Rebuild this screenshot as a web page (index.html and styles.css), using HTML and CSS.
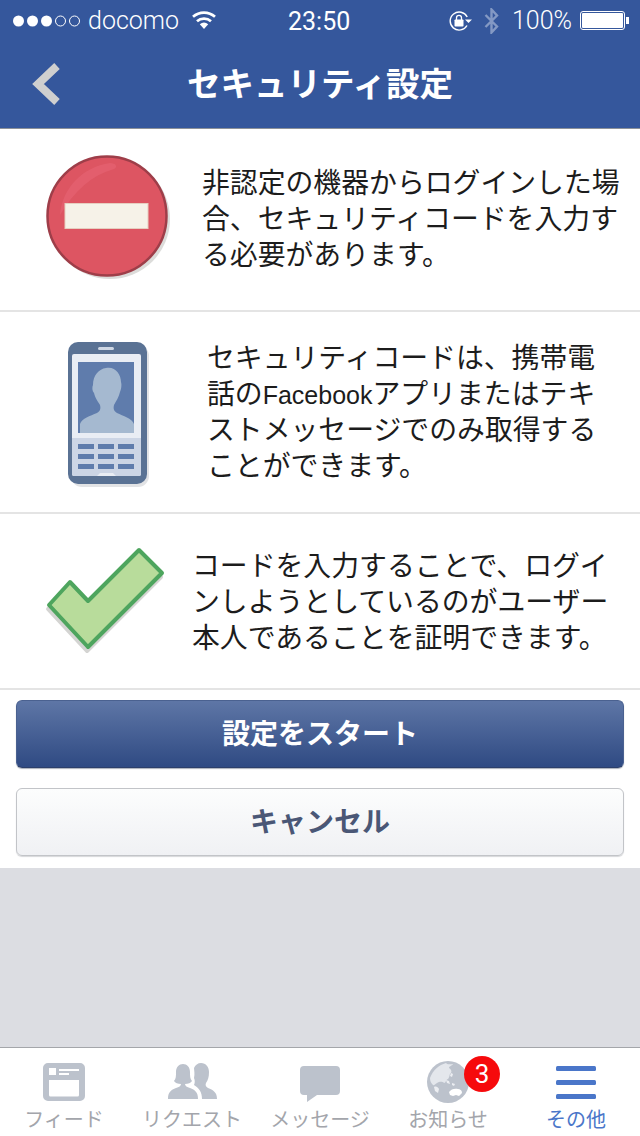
FILE: index.html
```html
<!DOCTYPE html>
<html lang="ja">
<head>
  <meta charset="UTF-8" />
  <meta name="viewport" content="width=device-width, initial-scale=1.0" />
  <title>セキュリティ設定</title>
  <link rel="stylesheet" href="styles.css">
</head>
<body>
  <div class="app">
    <header class="top">
      <div class="status">
        <div class="status-side">
          <svg class="signal" width="67" height="12" viewBox="0 0 67 12">
            <circle cx="5.500" cy="6" r="5.500" fill="#fff"/>
            <circle cx="19.500" cy="6" r="5.500" fill="#fff"/>
            <circle cx="33.500" cy="6" r="5.500" fill="#fff"/>
            <circle cx="47.500" cy="6" r="5" fill="none" stroke="#fff" stroke-width="1"/>
            <circle cx="61.500" cy="6" r="5" fill="none" stroke="#fff" stroke-width="1"/>
          </svg>
          <span class="carrier">docomo</span>
          <svg class="wifi" width="24" height="18" viewBox="0 0 24 18">
            <path d="M12 18 7.800 13.200a6.500 6.500 0 0 1 8.400 0Z" fill="#fff"/>
            <path d="M5 10.300a10.500 10.500 0 0 1 14 0M1 5.800a16.500 16.500 0 0 1 22 0" fill="none" stroke="#fff" stroke-width="2.700"/>
          </svg>
        </div>
        <span class="clock">23:50</span>
        <div class="status-side">
          <svg class="lock" width="23" height="20" viewBox="0 0 23 20">
            <path d="M18 14.500A9 9 0 1 1 18.200 6" fill="none" stroke="#fff" stroke-width="1.400"/>
            <path d="M16 8.500h7l-3.500 3.500Z" fill="#fff"/>
            <rect x="5.500" y="8.500" width="9" height="7" rx=".8" fill="#fff"/>
            <path d="M7.500 9V6.800a2.500 2.500 0 0 1 5 0V9" fill="none" stroke="#fff" stroke-width="1.300"/>
          </svg>
          <svg class="bt" width="15" height="26" viewBox="0 0 15 26">
            <path d="M1.500 7 13 18.500 7.500 24.500V1.500L13 7.500 1.500 19" fill="none" stroke="#8499c4" stroke-width="2.400"/>
          </svg>
          <span class="battery-pct">100%</span>
          <div class="battery"><div class="battery-fill"></div></div>
          <div class="battery-tip"></div>
        </div>
      </div>
      <div class="nav">
        <svg class="back" width="30" height="44" viewBox="0 0 30 44">
          <path d="M26 4 7 22l19 18" fill="none" stroke="#cfcfcf" stroke-width="8"/>
        </svg>
        <h1 class="nav-title">セキュリティ設定</h1>
      </div>
    </header>

    <section class="row row-stop">
      <svg class="stop-icon" width="130" height="130" viewBox="0 0 130 130">
        <circle cx="66" cy="66" r="60" fill="#dcdcda"/>
        <circle cx="63" cy="63" r="59.500" fill="#dd5562" stroke="#9e3e49" stroke-width="2.500"/>
        <path d="M16 62C18 36 38 14 66 10c6 0 8 4 4 6C48 22 30 38 16 62Z" fill="#e56272" opacity=".7"/>
        <rect x="21" y="50.500" width="83" height="25" fill="#f6f2e8" stroke="#e6cfc0" stroke-width="1"/>
      </svg>
      <p class="row-text">非認定の機器からログインした場<br>合、セキュリティコードを入力す<br>る必要があります。</p>
    </section>

    <section class="row row-phone">
      <svg class="phone-icon" width="84" height="150" viewBox="0 0 84 150">
        <rect x="5" y="5" width="78" height="142" rx="11" fill="#e2e3e5"/>
        <rect x="2" y="2" width="79" height="142" rx="10" fill="#5a7294"/>
        <rect x="32" y="7" width="16" height="3" rx="1.500" fill="#cfd7e4"/>
        <rect x="6" y="14" width="69" height="122" rx="2" fill="#e9edf4"/>
        <rect x="12" y="22" width="56" height="71" fill="#5f7cac"/>
        <path d="M14 93V84c2-6 10-8 17-11 3-2 4-4 3-8-1-2-5-7-6-12-2-2-2-6-1-8 0-10 6-16 13-17 9-2 15 6 15 14 1 3 0 8-1 10-1 5-4 9-6 13-1 4 0 6 3 8 6 3 15 5 17 11V93Z" fill="#a5b9d0"/>
        <path d="M6 98h69v36a2 2 0 0 1-2 2H50l-3-3H34l-3 3H8a2 2 0 0 1-2-2Z" fill="#ccd5e5"/>
        <g fill="#5f7cac">
          <rect x="12" y="104" width="16" height="5"/><rect x="32" y="104" width="16" height="5"/><rect x="52" y="104" width="16" height="5"/>
          <rect x="12" y="114" width="16" height="5"/><rect x="32" y="114" width="16" height="5"/><rect x="52" y="114" width="16" height="5"/>
          <rect x="12" y="124" width="16" height="5"/><rect x="32" y="124" width="16" height="5"/><rect x="52" y="124" width="16" height="5"/>
        </g>
      </svg>
      <p class="row-text">セキュリティコードは、携帯電<br>話の<span class="latin">Facebook</span>アプリまたはテキ<br>ストメッセージでのみ取得する<br>ことができます。</p>
    </section>

    <section class="row row-check">
      <svg class="check-icon" width="122" height="108" viewBox="0 0 122 108">
        <path d="M6 58 27 35 45 54 96 3 119 26 45 100Z" fill="#d4d4d2" stroke="#d4d4d2" stroke-width="4" stroke-linejoin="round" transform="translate(-1 4)"/>
        <path d="M6 58 27 35 45 54 96 3 119 26 45 100Z" fill="#b8dc9b" stroke="#4ea55e" stroke-width="4" stroke-linejoin="round"/>
      </svg>
      <p class="row-text">コードを入力することで、ログイ<br>ンしようとしているのがユーザー<br>本人であることを証明できます。</p>
    </section>

    <div class="actions">
      <button class="btn btn-primary">設定をスタート</button>
      <button class="btn btn-cancel">キャンセル</button>
    </div>

    <div class="spacer"></div>

    <nav class="tabs">
      <div class="tab">
        <svg width="44" height="40" viewBox="0 0 44 40">
          <path fill-rule="evenodd" d="M6 1h32a5 5 0 0 1 5 5v28a5 5 0 0 1-5 5H6a5 5 0 0 1-5-5V6a5 5 0 0 1 5-5ZM7 18v15a1.500 1.500 0 0 0 1.500 1.500h27A1.500 1.500 0 0 0 37 33V18ZM7 6v7h7V6ZM17 7v2h20V7ZM17 11v2h10v-2Z" fill="#bcc2cc"/>
        </svg>
        <span class="tab-label">フィード</span>
      </div>
      <div class="tab">
        <svg width="49" height="40" viewBox="0 -1 49 40">
          <path d="M0 36c0-7 3-9 8-11 3-1 5-2 5-4-3 0-6-1-7-3 2-2 2-5 2-9 0-5 3-8 7-8s7 3 7 8c0 4 0 7 2 9-1 2-4 3-7 3 0 2 2 3 5 4 5 2 8 4 8 11Z" fill="#bcc2cc"/>
          <path d="M33 0c5 0 8 4 8 9 0 5-1 8-3 11-1 2 0 4 2 5 5 2 9 4 9 11H34c0-7-3-11-8-14 1-2 1-5 0-7 1-4 0-8 0-10 1-3 4-5 7-5Z" fill="#bcc2cc"/>
        </svg>
        <span class="tab-label">リクエスト</span>
      </div>
      <div class="tab">
        <svg width="42" height="40" viewBox="0 0 42 40">
          <path d="M5 4h32a4 4 0 0 1 4 4v21a4 4 0 0 1-4 4H18L8 40v-7H5a4 4 0 0 1-4-4V8a4 4 0 0 1 4-4Z" fill="#bcc2cc"/>
        </svg>
        <span class="tab-label">メッセージ</span>
      </div>
      <div class="tab tab-globe">
        <svg width="42" height="42" viewBox="0 0 42 42">
          <circle cx="21" cy="21" r="21" fill="#bcc2cc"/>
          <path d="M3 17C6 9 12 4 19 2c1 2 5 1 7 1-1 2-4 2-4 4 2 1 3 3 2 5-2 1-1 4-3 6-2 0-2 4-4 4-2-2-5-1-7 0-2 1-3 3-4 2-2-2-3-4-3-7Z" fill="#e4e7ec"/>
          <path d="M7 26c2-1 4 0 5 2l-1 4-3-2ZM24 12l2 1-1 3-2-1ZM19 19l3 1 1 3-3-1ZM25 22l3 1-1 2-2-1Z" fill="#eceef2"/>
          <path d="M22 31c2-3 6-4 9-3 2 0 4 1 4 4l-3 3-3-1-3 1-3-1Z" fill="#fff"/>
        </svg>
        <span class="tab-label">お知らせ</span>
        <span class="badge">3</span>
      </div>
      <div class="tab tab-active">
        <svg width="40" height="33" viewBox="0 0 40 33">
          <rect y="0" width="40" height="5" rx="1.500" fill="#4a76c9"/>
          <rect y="14" width="40" height="5" rx="1.500" fill="#4a76c9"/>
          <rect y="28" width="40" height="5" rx="1.500" fill="#4a76c9"/>
        </svg>
        <span class="tab-label">その他</span>
      </div>
    </nav>
  </div>
</body>
</html>
```

FILE: styles.css
```css
* {
  box-sizing: border-box;
}
body {
  margin: 0;
  background: #fff;
  font-family: "Liberation Sans", "Noto Sans CJK JP", sans-serif;
}
.app {
  width: 640px;
  height: 1136px;
  display: flex;
  flex-direction: column;
  overflow: hidden;
}

/* header */
.top {
  height: 129px;
  background: #35579c;
  border-bottom: 1px solid #8c9199;
  color: #fff;
}
.status {
  height: 40px;
  padding: 1px 11px 0 13px;
  display: flex;
  align-items: center;
  justify-content: space-between;
  position: relative;
}
.status-side {
  display: flex;
  align-items: center;
}
.carrier {
  margin-left: 8px;
  font-family: Roboto, sans-serif;
  font-weight: 300;
  font-size: 25px;
}
.wifi {
  margin-left: 13px;
  margin-bottom: 2px;
}
.clock {
  position: absolute;
  left: 288px;
  top: 7px;
  font-family: Roboto, sans-serif;
  font-size: 25px;
  font-weight: 400;
}
.lock {
  margin-right: 12px;
}
.bt {
  margin-right: 13px;
}
.battery-pct {
  font-family: Roboto, sans-serif;
  font-weight: 300;
  font-size: 25px;
  margin-right: 8px;
}
.battery {
  width: 45px;
  height: 19px;
  border: 1px solid #fff;
  border-radius: 3px;
  padding: 1px;
}
.battery-fill {
  height: 100%;
  background: #fff;
  border-radius: 1px;
}
.battery-tip {
  width: 3px;
  height: 7px;
  background: #fff;
  margin-left: 1px;
}
.nav {
  height: 88px;
  display: flex;
  align-items: center;
  justify-content: center;
  position: relative;
}
.back {
  position: absolute;
  left: 31px;
  top: 22px;
}
.nav-title {
  margin: 0 0 5px;
  font-size: 33.500px;
  font-weight: 700;
}

/* info rows */
.row {
  display: flex;
  align-items: center;
  background: #fff;
  border-bottom: 2px solid #e4e4e4;
}
.row-text {
  margin: 0;
  font-size: 27.850px;
  line-height: 36px;
  color: #1c1c1c;
  white-space: nowrap;
}
.latin {
  font-size: 25px;
}
.row-stop {
  height: 183px;
  padding-left: 44px;
}
.row-stop .stop-icon {
  margin-bottom: 4px;
}
.row-stop .row-text {
  margin-left: 28px;
}
.row-phone {
  height: 202px;
  padding-left: 66px;
}
.row-phone .phone-icon {
  margin-top: 6px;
}
.row-phone .row-text {
  margin: 2px 0 0 57px;
}
.row-check {
  height: 176px;
  padding-left: 43px;
}
.row-check .row-text {
  margin: 4px 0 0 27px;
}

/* buttons */
.actions {
  height: 178px;
  padding: 10px 16px 12px;
  display: flex;
  flex-direction: column;
  gap: 20px;
  background: #fff;
}
.btn {
  height: 68px;
  border-radius: 6px;
  font-family: inherit;
  font-size: 28px;
  font-weight: 700;
  padding: 0 0 4px;
}
.btn-primary {
  color: #fff;
  background: linear-gradient(#5e76a6, #2f4a83);
  border: 1px solid #4a6190;
  border-bottom-color: #2c3f6b;
  box-shadow: 0 1px 1px #aab0bb;
}
.btn-cancel {
  color: #4a5776;
  background: linear-gradient(#fcfdfd, #f0f1f4);
  border: 1px solid #c2c4c8;
  box-shadow: 0 1px 1px #d6d7da;
}

.spacer {
  flex: 1;
  background: #dcdde2;
}

/* tab bar */
.tabs {
  height: 89px;
  display: grid;
  grid-template-columns: repeat(5, 1fr);
  background: #fff;
  border-top: 1px solid #a4a6aa;
}
.tab {
  position: relative;
  display: flex;
  flex-direction: column;
  align-items: center;
  justify-content: flex-end;
  padding-bottom: 3px;
}
.tab-label {
  font-size: 20px;
  line-height: 26px;
  margin-top: 5px;
  color: #a3a5ab;
  white-space: nowrap;
}
.tab-active .tab-label {
  color: #4a76c9;
}
.tab-active svg {
  margin-bottom: 3px;
}
.tab-globe svg {
  margin-bottom: -1px;
}
.badge {
  position: absolute;
  left: 80px;
  top: 8px;
  width: 36px;
  height: 36px;
  border-radius: 50%;
  background: #f60a0c;
  color: #fff;
  font-family: Roboto, sans-serif;
  font-size: 26px;
  line-height: 36px;
  text-align: center;
}
```
